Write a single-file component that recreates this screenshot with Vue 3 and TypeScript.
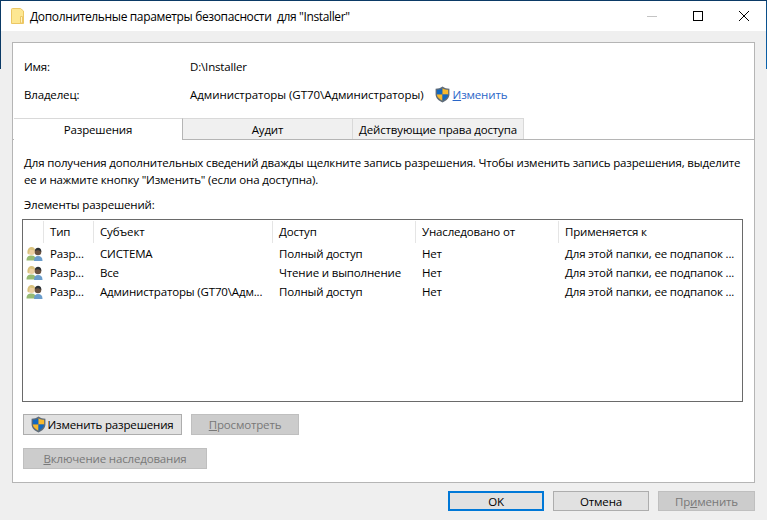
<script setup lang="ts">
interface Row { type: string; subject: string; access: string; from: string; applies: string }
const cols = ['Тип', 'Субъект', 'Доступ', 'Унаследовано от', 'Применяется к']
const rows: Row[] = [
  { type: 'Разр...', subject: 'СИСТЕМА', access: 'Полный доступ', from: 'Нет', applies: 'Для этой папки, ее подпапок ...' },
  { type: 'Разр...', subject: 'Все', access: 'Чтение и выполнение', from: 'Нет', applies: 'Для этой папки, ее подпапок ...' },
  { type: 'Разр...', subject: 'Администраторы (GT70\\Адм...', access: 'Полный доступ', from: 'Нет', applies: 'Для этой папки, ее подпапок ...' },
]
</script>

<template>
  <div class="window">
    <span class="edge edge-left"></span>
    <span class="edge edge-right"></span>
    <header class="titlebar">
      <svg class="folder" width="13" height="16" viewBox="0 0 13 16">
        <path d="M0.5 1.500 Q0.500 0.500 1.500 0.500 H9.500 L12.500 3 V15.500 H0.500 Z" fill="#fde792" stroke="#ecc764" />
        <path d="M9.500 8.500 H11.500 V15 H9.500 Z" fill="#fff3c4" stroke="#ecc764" stroke-width="1" />
      </svg>
      <span class="title">Дополнительные параметры безопасности&nbsp; для "Installer"</span>
      <div class="controls">
        <svg width="10" height="1" viewBox="0 0 10 1"><rect width="10" height="1" fill="#c4c4c4" /></svg>
        <svg width="10" height="10" viewBox="0 0 10 10"><rect x="0.5" y="0.5" width="9" height="9" fill="none" stroke="#000" /></svg>
        <svg width="10" height="10" viewBox="0 0 10 10"><path d="M0 0 L10 10 M10 0 L0 10" stroke="#000" stroke-width="1" /></svg>
      </div>
    </header>

    <main class="body">
      <section class="panel">
        <div class="info">
          <div class="info-row">
            <span class="info-label">Имя:</span>
            <span>D:\Installer</span>
          </div>
          <div class="info-row">
            <span class="info-label">Владелец:</span>
            <span class="owner">Администраторы (GT70\Администраторы)</span>
            <svg class="shield owner-shield" width="15" height="17" viewBox="0 0 14 16">
              <path d="M7 0.5 C5 2 3 2.5 0.5 2.5 V8 C0.5 11.5 3.5 14 7 15.5 C10.5 14 13.500 11.5 13.500 8 V2.500 C11 2.500 9 2 7 0.500 Z" fill="#5f6b78" />
              <path d="M7 2 V8 H1.700 V3.600 C3.700 3.500 5.500 3 7 2 Z" fill="#1268c0" />
              <path d="M7 2 C8.500 3 10.300 3.500 12.300 3.600 V8 H7 Z" fill="#f8b92c" />
              <path d="M7 8 H1.700 C1.900 10.500 4.200 12.500 7 13.800 Z" fill="#f8b92c" />
              <path d="M7 8 H12.300 C12.100 10.500 9.800 12.500 7 13.800 Z" fill="#1268c0" />
            </svg>
            <a class="link"><u>И</u>зменить</a>
          </div>
        </div>

        <nav class="tabs">
          <div class="tab active">Разрешения</div>
          <div class="tab second">Аудит</div>
          <div class="tab third">Действующие права доступа</div>
        </nav>

        <div class="tab-body">
          <p class="hint">Для получения дополнительных сведений дважды щелкните запись разрешения. Чтобы изменить запись разрешения, выделите<br />ее и нажмите кнопку "Изменить" (если она доступна).</p>
          <div class="list-label">Элементы разрешений:</div>
          <div class="list">
            <div class="grid head">
              <span class="cell icon-cell"></span>
              <span v-for="c in cols" :key="c" class="cell">{{ c }}</span>
            </div>
            <div v-for="(r, i) in rows" :key="i" class="grid row">
              <span class="cell icon-cell">
                <svg width="17" height="16" viewBox="0 0 17 16">
                  <path d="M0.500 14.500 C0.500 10.500 2.500 9.500 5.500 9.500 C8.500 9.500 10 11 10 14.500 Z" fill="#97bb74" />
                  <circle cx="5.500" cy="5.500" r="3.500" fill="#eccfa0" />
                  <path d="M1.500 7.500 C1 3 3.500 1 5.500 1 C8 1 9 2.500 9 4.500 C7 4.500 5 3.500 4 3.500 C3.500 4.500 3.500 7 2.500 8.500 Z" fill="#d9c27e" />
                  <path d="M8 15 C8 11.500 9.500 10 12 10 C15 10 16.500 11.500 16.500 15 Z" fill="#6a9dcc" />
                  <circle cx="12" cy="6" r="3.300" fill="#6a5240" />
                  <path d="M8.800 5 C9 2.500 10.500 1.800 12 1.800 C14 1.800 15.500 3 15.300 6 C13.500 4 11 4 8.800 5 Z" fill="#2b2f33" />
                </svg>
              </span>
              <span class="cell">{{ r.type }}</span>
              <span class="cell">{{ r.subject }}</span>
              <span class="cell">{{ r.access }}</span>
              <span class="cell">{{ r.from }}</span>
              <span class="cell">{{ r.applies }}</span>
            </div>
          </div>
          <div class="actions">
            <button class="btn edit">
              <svg class="shield" width="15" height="17" viewBox="0 0 14 16">
                <path d="M7 0.5 C5 2 3 2.5 0.5 2.5 V8 C0.5 11.5 3.5 14 7 15.5 C10.5 14 13.500 11.5 13.500 8 V2.500 C11 2.500 9 2 7 0.500 Z" fill="#5f6b78" />
                <path d="M7 2 V8 H1.700 V3.600 C3.700 3.500 5.500 3 7 2 Z" fill="#1268c0" />
                <path d="M7 2 C8.500 3 10.300 3.500 12.300 3.600 V8 H7 Z" fill="#f8b92c" />
                <path d="M7 8 H1.700 C1.900 10.500 4.200 12.500 7 13.800 Z" fill="#f8b92c" />
                <path d="M7 8 H12.300 C12.100 10.500 9.800 12.500 7 13.800 Z" fill="#1268c0" />
              </svg>
              <span>Изменить разрешения</span>
            </button>
            <button class="btn disabled view"><span><u>П</u>росмотреть</span></button>
          </div>
          <button class="btn disabled inherit"><span><u>В</u>ключение наследования</span></button>
        </div>
      </section>

      <footer class="footer">
        <button class="btn foot primary">OK</button>
        <button class="btn foot">Отмена</button>
        <button class="btn foot disabled apply"><span>Пр<u>и</u>менить</span></button>
      </footer>
    </main>
  </div>
</template>

<style>
html, body { margin: 0; background: #efefef; overflow: hidden; }
</style>

<style scoped>
.window {
  position: relative;
  width: 767px;
  height: 520px;
  box-sizing: border-box;
  display: flex;
  flex-direction: column;
  overflow: hidden;
  font-family: "Open Sans", "Noto Sans", sans-serif;
  font-size: 11.5px;
  letter-spacing: -0.16px;
  color: #000;
  background: #efefef;
  border-top: 1px solid #0b3a66;
}
.edge { position: absolute; top: 0; width: 1px; height: 68px; z-index: 2; }
.edge-left { left: 0; background: #0b3a66; }
.edge-right { right: 0; background: linear-gradient(#0b4a80, #0a64b0); }
.titlebar {
  height: 30px;
  flex: none;
  display: flex;
  align-items: center;
  background: #fff;
  padding-left: 11px;
}
.title { margin-left: 6px; font-size: 12px; letter-spacing: -0.36px; }
.folder { flex: none; }
.controls {
  margin-left: auto;
  display: flex;
  align-items: center;
  gap: 36px;
  padding-right: 18px;
}
.body {
  flex: 1;
  display: flex;
  flex-direction: column;
  padding: 11px 12px 0 12px;
  min-height: 0;
}
.panel {
  height: 441px;
  flex: none;
  box-sizing: border-box;
  display: flex;
  flex-direction: column;
  background: #fff;
  border: 1px solid #b5b5b5;
}
.info { height: 75px; flex: none; padding: 9px 0 0 11px; box-sizing: border-box; }
.info-row { height: 28px; display: flex; align-items: center; }
.info-label { width: 166px; flex: none; }
.owner { letter-spacing: -0.05px; }
.owner-shield { margin-left: 11px; }
.link { color: #2a66c8; margin-left: 3px; }
.tabs { display: flex; height: 21px; flex: none; margin-left: 1px; }
.tab {
  box-sizing: border-box;
  height: 21px;
  display: flex;
  align-items: center;
  justify-content: center;
  background: #f0f0f0;
  border-top: 1px solid #d9d9d9;
  border-right: 1px solid #d9d9d9;
}
.tab.active { width: 169px; background: #fff; height: 22px; position: relative; z-index: 1; border-right-color: #b5b5b5; }
.tab.second { width: 170px; }
.tab.third { width: 171px; }
.tab-body {
  flex: 1;
  border-top: 1px solid #b5b5b5;
  padding: 0 11px 0 9px;
  min-height: 0;
}
.hint { margin: 14px 0 0 2px; line-height: 17px; white-space: nowrap; }
.list-label { margin: 9px 0 0 2px; line-height: 16px; }
.list {
  box-sizing: border-box;
  height: 183px;
  margin-top: 6px;
  border: 1px solid #6a6a6a;
}
.grid {
  display: grid;
  grid-template-columns: 21px 50px 179px 143px 143px 183px;
  align-items: center;
}
.cell { white-space: nowrap; overflow: hidden; padding-left: 6px; }
.head { height: 24px; }
.head .cell { height: 22px; line-height: 22px; border-right: 1px solid #e5e5e5; box-sizing: border-box; }
.head .cell:last-child { border-right: 0; }
.row { height: 19px; }
.icon-cell { padding-left: 3px; display: flex; align-items: center; }
.actions { display: flex; gap: 9px; margin-top: 12px; margin-left: 1px; }
.btn {
  box-sizing: border-box;
  height: 21px;
  font: inherit;
  letter-spacing: inherit;
  background: #e1e1e1;
  color: #000;
  border: 1px solid #adadad;
  padding: 0;
  display: flex;
  align-items: center;
  justify-content: center;
}
.edit { width: 159px; gap: 1px; }
.view { width: 108px; }
.inherit { width: 184px; margin: 13px 0 0 1px; }
.disabled { background: #cccccc; color: #787878; border-color: #bfbfbf; }
.footer { display: flex; justify-content: flex-end; gap: 9px; margin-top: 8px; }
.foot { width: 96px; height: 20px; }
.primary { border: 2px solid #0078d7; }
.apply { width: 97px; }
</style>
